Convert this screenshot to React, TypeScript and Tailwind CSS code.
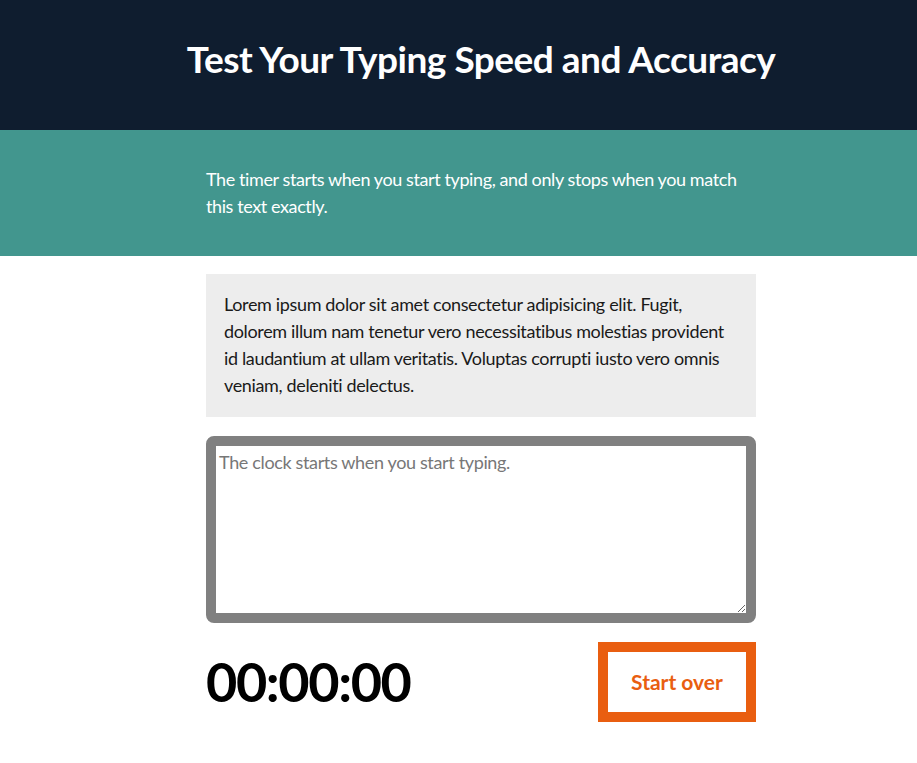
export default function App() {
  return (
    <div className="min-h-screen bg-white font-['Lato','Open_Sans',sans-serif] text-[#111]">
      <header className="bg-[#0f1d2f] h-[130px] flex items-center pl-[206px] pb-[12px]">
        <div className="w-[550px] flex justify-center">
          <h1 className="shrink-0 whitespace-nowrap text-white text-[37px] font-bold tracking-[-0.5px]">
            Test Your Typing Speed and Accuracy
          </h1>
        </div>
      </header>

      <section className="bg-[#42968e] h-[126px] pl-[206px] pt-[36px]">
        <p className="w-[550px] text-white text-[18px] leading-[27px] tracking-[-0.4px]">
          The timer starts when you start typing, and only stops when you match this text exactly.
        </p>
      </section>

      <main className="pl-[206px] pt-[18px]">
        <div className="w-[550px] bg-[#ededed] px-[18px] pt-[17px] pb-[18px]">
          <p className="text-[18px] leading-[27px] tracking-[-0.35px] text-[#1a1a1a]">
            Lorem ipsum dolor sit amet consectetur adipisicing elit. Fugit, dolorem illum nam tenetur vero
            necessitatibus molestias provident id laudantium at ullam veritatis. Voluptas corrupti iusto vero
            omnis veniam, deleniti delectus.
          </p>
        </div>

        <div className="mt-[19px] w-[550px] h-[187px]">
          <textarea
            placeholder="The clock starts when you start typing."
            className="w-full h-full border-[10px] border-[#808080] rounded-[8px] px-[3px] pt-[4px] text-[18px] leading-[24px] tracking-[-0.35px] text-[#222] placeholder:text-[#777] outline-none resize-y bg-white"
          />
        </div>

        <div className="mt-[19px] w-[550px] flex items-center justify-between">
          <div className="text-[54px] font-bold leading-none tracking-[-1.4px] text-black">00:00:00</div>
          <button className="w-[158px] h-[80px] border-[10px] border-[#e95e10] bg-white text-[#e95e10] text-[21px] font-bold">
            Start over
          </button>
        </div>
      </main>
    </div>
  )
}
